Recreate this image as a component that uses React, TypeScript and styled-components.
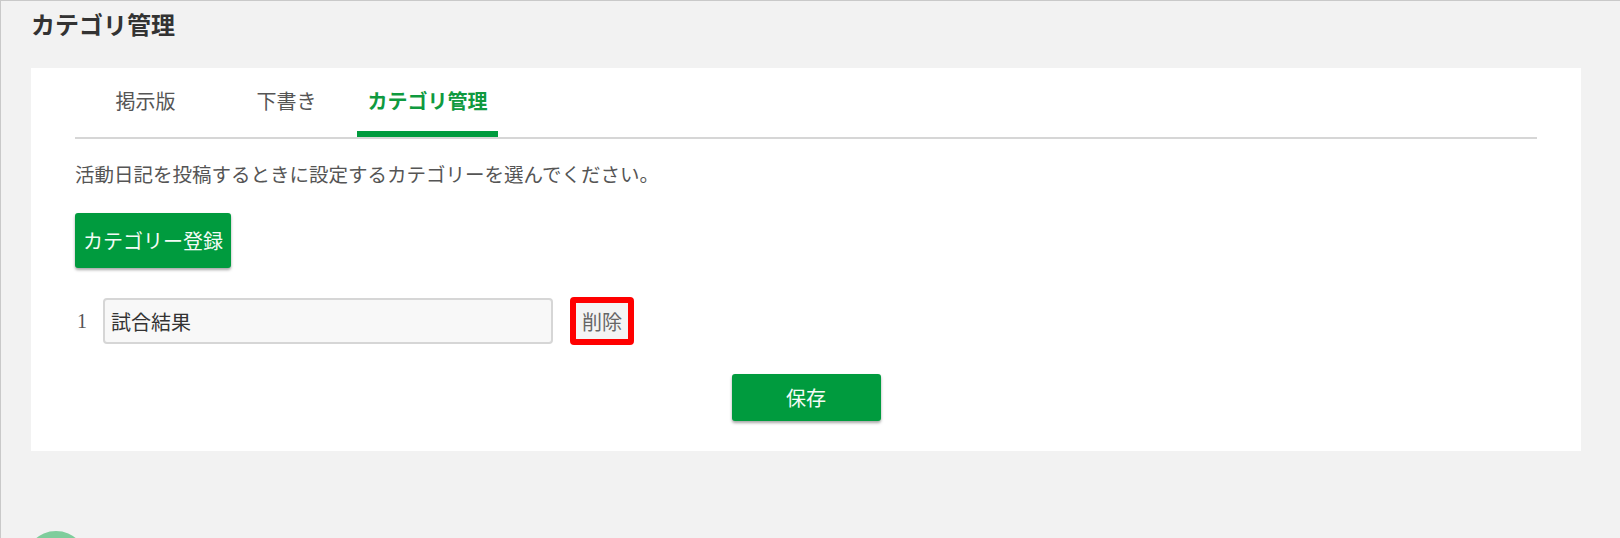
import React from 'react';
import styled, { createGlobalStyle } from 'styled-components';

const tabs = ['掲示版', '下書き', 'カテゴリ管理'];
const categories = ['試合結果'];

function App() {
  return (
    <>
      <GlobalStyle />
      <Page>
        <Title>カテゴリ管理</Title>
        <Card>
          <TabBar>
            {tabs.map((t, i) => (
              <Tab key={t} $active={i === 2}>
                {t}
              </Tab>
            ))}
          </TabBar>
          <Description>活動日記を投稿するときに設定するカテゴリーを選んでください。</Description>
          <RegisterBtn>カテゴリー登録</RegisterBtn>
          {categories.map((c, i) => (
            <CategoryRow key={c}>
              <RowNumber>{i + 1}</RowNumber>
              <CategoryInput defaultValue={c} />
              <DeleteBtn>削除</DeleteBtn>
            </CategoryRow>
          ))}
          <SaveArea>
            <SaveBtn>保存</SaveBtn>
          </SaveArea>
        </Card>
        <FloatingDot />
      </Page>
    </>
  );
}

export default App;

const GlobalStyle = createGlobalStyle`
  html, body {
    margin: 0;
    padding: 0;
    overflow: hidden;
  }
  body {
    font-family: "Noto Sans CJK JP", "Noto Sans", sans-serif;
    background-color: #f2f2f2;
  }
  * {
    box-sizing: border-box;
  }
`;

const Page = styled.div`
  min-height: 100vh;
  background-color: #f2f2f2;
  border-top: 1px solid #c9c9c9;
  border-left: 1px solid #c9c9c9;
  padding: 0 39px 0 30px;
`;

const Title = styled.h1`
  margin: 0 0 26px;
  padding-top: 5px;
  font-size: 24px;
  line-height: 36px;
  font-weight: bold;
  color: #333;
`;

const Card = styled.div`
  background-color: #fff;
  padding: 0 44px 30px;
`;

const TabBar = styled.div`
  display: flex;
  border-bottom: 2px solid #d6d6d6;
`;

const Tab = styled.div<{ $active?: boolean }>`
  width: 141px;
  height: 69px;
  padding-top: 2px;
  display: flex;
  align-items: center;
  justify-content: center;
  font-size: 20px;
  font-weight: ${(p) => (p.$active ? 'bold' : 'normal')};
  color: ${(p) => (p.$active ? '#0f9a3f' : '#555')};
  border-bottom: 6px solid ${(p) => (p.$active ? '#009b3e' : 'transparent')};
  cursor: pointer;
`;

const Description = styled.p`
  margin: 21px 0 0;
  font-size: 19.5px;
  line-height: 28px;
  color: #555;
`;

const GreenButton = styled.button`
  border: none;
  border-radius: 3px;
  background-color: #009b3e;
  color: #f4fbf6;
  font-family: "Noto Sans CJK JP", "Noto Sans", sans-serif;
  font-size: 20px;
  cursor: pointer;
  box-shadow: 0px 2px 3px rgba(0, 0, 0, 0.35);
`;

const RegisterBtn = styled(GreenButton)`
  display: block;
  margin-top: 25px;
  height: 55px;
  padding: 0 8px;
`;

const CategoryRow = styled.div`
  display: flex;
  align-items: center;
  margin-top: 29px;
  height: 48px;
`;

const RowNumber = styled.span`
  width: 28px;
  padding-left: 2px;
  font-family: "Liberation Serif", serif;
  font-size: 20px;
  color: #555;
`;

const CategoryInput = styled.input`
  width: 450px;
  height: 46px;
  padding: 0 6px;
  border: 2px solid #d6d6d6;
  border-radius: 4px;
  background-color: #f8f8f8;
  font-family: "Noto Sans CJK JP", "Noto Sans", sans-serif;
  font-size: 20px;
  color: #333;
  outline: none;
`;

const DeleteBtn = styled.button`
  margin-left: 17px;
  width: 64px;
  height: 48px;
  padding: 0;
  border: 6px solid #ff0000;
  border-radius: 4px;
  background-color: #f4f4f4;
  font-family: "Noto Sans CJK JP", "Noto Sans", sans-serif;
  font-size: 20px;
  color: #666;
  cursor: pointer;
`;

const SaveArea = styled.div`
  display: flex;
  justify-content: center;
  margin-top: 29px;
`;

const SaveBtn = styled(GreenButton)`
  width: 149px;
  height: 47px;
`;

const FloatingDot = styled.div`
  position: fixed;
  left: 24px;
  top: 531px;
  width: 64px;
  height: 64px;
  border-radius: 50%;
  background-color: #7fcd9c;
`;
